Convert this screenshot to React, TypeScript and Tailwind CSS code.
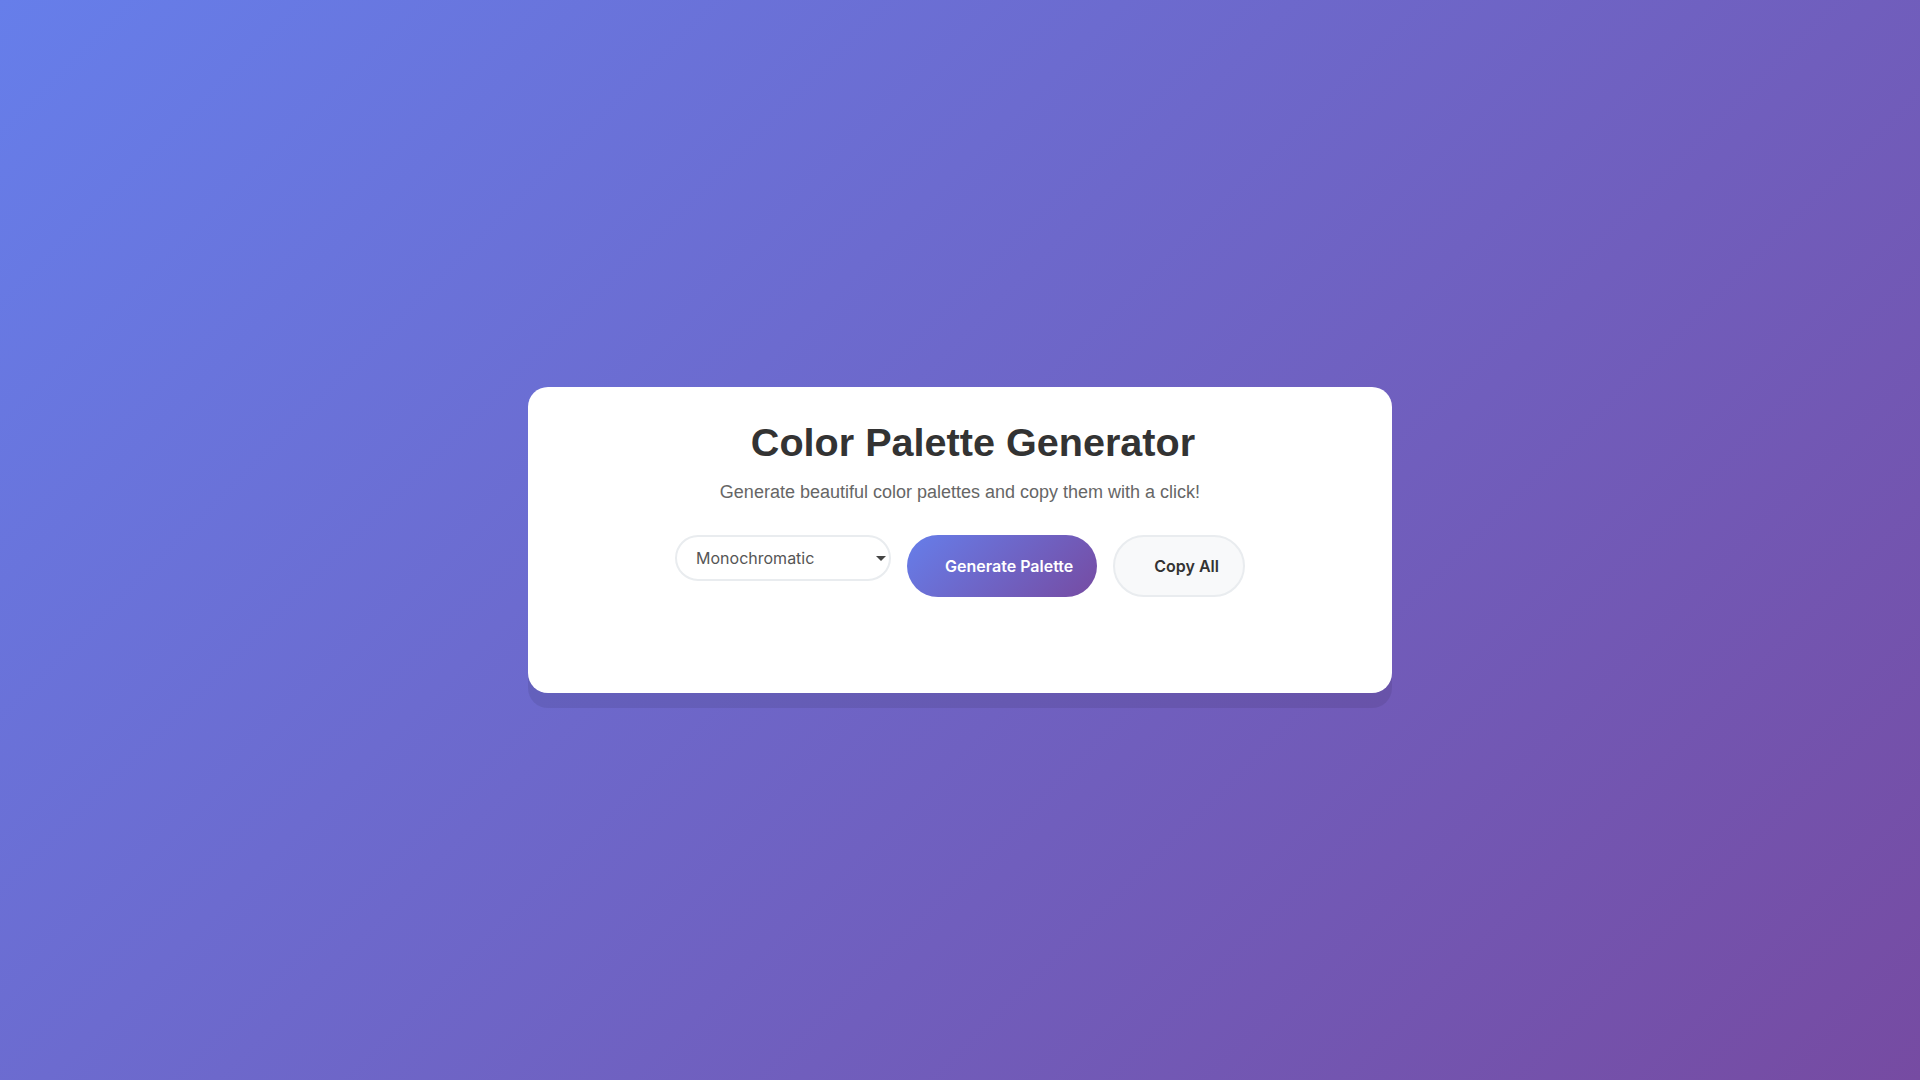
import { useState } from 'react';

const modes = ['Monochromatic', 'Analogous', 'Complementary', 'Triadic', 'Random'];

const App = () => {
  const [mode, setMode] = useState('Monochromatic');

  return (
    <div className="min-h-screen w-full flex items-center justify-center bg-[linear-gradient(135deg,#667eea_0%,#764ba2_100%)]">
      <div className="w-[864px] bg-white rounded-[20px] shadow-[0_15px_0_rgba(0,0,0,0.08)] pt-[32px] pb-[96px] flex flex-col items-center">
        <h1 className="pl-[26px] text-center text-[39.6px] leading-[46px] font-bold text-[#333] font-['Liberation_Sans',Arial,sans-serif]">
          Color Palette Generator
        </h1>
        <p className="mt-[17px] text-center text-[18px] leading-[20px] text-[#666] font-['Liberation_Sans',Arial,sans-serif]">
          Generate beautiful color palettes and copy them with a click!
        </p>

        {/* Controls */}
        <div className="mt-[33px] flex items-start gap-4 font-['Inter',sans-serif]">
          <div className="relative">
            <select
              value={mode}
              onChange={(e) => setMode(e.target.value)}
              className="appearance-none h-[46px] w-[216px] rounded-full border-2 border-[#e9ecef] bg-white pl-[19px] pr-8 text-[16px] text-[#555] outline-none"
            >
              {modes.map((m) => (
                <option key={m} value={m}>
                  {m}
                </option>
              ))}
            </select>
            <svg
              className="pointer-events-none absolute right-[5px] top-[21px]"
              width="10"
              height="5"
              viewBox="0 0 10 5"
            >
              <path d="M0 0 L10 0 L5 5 Z" fill="#444" />
            </svg>
          </div>

          <button className="h-[62px] rounded-full pl-[38px] pr-[24px] text-[16px] font-semibold text-white bg-[linear-gradient(135deg,#667eea_0%,#764ba2_100%)]">
            Generate Palette
          </button>

          <button className="h-[62px] rounded-full border-2 border-[#e9ecef] bg-[#f8f9fa] pl-[39px] pr-[24px] text-[16px] font-semibold text-[#333]">
            Copy All
          </button>
        </div>
      </div>
    </div>
  );
};

export default App;
